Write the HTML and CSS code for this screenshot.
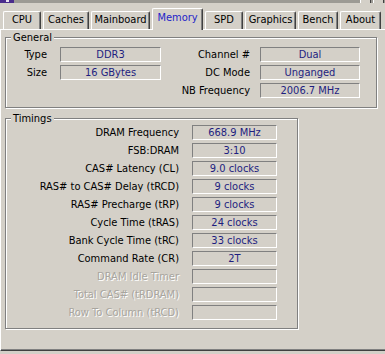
FILE: index.html
```html
<!DOCTYPE html>
<html>
<head>
<meta charset="utf-8">
<link rel="stylesheet" href="styles.css">
</head>
<body>
<div class="window">
  <div class="titlebar">
    <span class="appicon"><span class="appmark"></span></span>
    <span class="tbtns"><span class="tbtn"></span><span class="tbtn"></span></span>
  </div>
  <div class="tabs">
    <div class="tab t-cpu">CPU</div>
    <div class="tab t-caches">Caches</div>
    <div class="tab t-main">Mainboard</div>
    <div class="tab t-mem active">Memory</div>
    <div class="tab t-spd">SPD</div>
    <div class="tab t-gfx">Graphics</div>
    <div class="tab t-bench">Bench</div>
    <div class="tab t-about">About</div>
  </div>
  <div class="panel">
    <div class="group general">
      <div class="legend">General</div>
      <div class="gen-grid">
        <div class="lbl">Type</div>
        <div class="field">DDR3</div>
        <div class="lbl lbl2">Channel #</div>
        <div class="field">Dual</div>

        <div class="lbl">Size</div>
        <div class="field">16 GBytes</div>
        <div class="lbl lbl2">DC Mode</div>
        <div class="field">Unganged</div>

        <div class="lbl"></div>
        <div class="empty"></div>
        <div class="lbl lbl2">NB Frequency</div>
        <div class="field">2006.7 MHz</div>
      </div>
    </div>
    <div class="group timings">
      <div class="legend">Timings</div>
      <div class="tim-grid">
        <div class="lbl">DRAM Frequency</div><div class="field">668.9 MHz</div>
        <div class="lbl">FSB:DRAM</div><div class="field">3:10</div>
        <div class="lbl">CAS# Latency (CL)</div><div class="field">9.0 clocks</div>
        <div class="lbl">RAS# to CAS# Delay (tRCD)</div><div class="field">9 clocks</div>
        <div class="lbl">RAS# Precharge (tRP)</div><div class="field">9 clocks</div>
        <div class="lbl">Cycle Time (tRAS)</div><div class="field">24 clocks</div>
        <div class="lbl">Bank Cycle Time (tRC)</div><div class="field">33 clocks</div>
        <div class="lbl">Command Rate (CR)</div><div class="field">2T</div>
        <div class="lbl disabled">DRAM Idle Timer</div><div class="field"></div>
        <div class="lbl disabled">Total CAS# (tRDRAM)</div><div class="field"></div>
        <div class="lbl disabled">Row To Column (tRCD)</div><div class="field"></div>
      </div>
    </div>
  </div>
</div>
</body>
</html>
```

FILE: styles.css
```css
* { box-sizing: border-box; }
html, body {
  margin: 0;
  padding: 0;
  background: #d4d0c8;
  overflow: hidden;
}
body {
  width: 385px;
  height: 354px;
  font-family: "DejaVu Sans Condensed", "DejaVu Sans", sans-serif;
  font-size: 11px;
  color: #000;
}
.window {
  width: 385px;
  height: 354px;
  position: relative;
}
.titlebar {
  height: 3px;
  background: #9c9a94;
  display: flex;
  justify-content: space-between;
}
.appicon {
  width: 14px;
  height: 3px;
  background: #4a2c8c;
  display: flex;
  justify-content: center;
}
.appmark {
  width: 3px;
  height: 2px;
  background: #e8e0f0;
}
.tbtns {
  display: flex;
  gap: 2px;
  margin-right: 1px;
}
.tbtn {
  width: 11px;
  height: 3px;
  background: #d4d0c8;
  border-left: 1px solid #fff;
  border-right: 1px solid #404040;
}
.tabs {
  height: 26px;
  display: flex;
  align-items: flex-end;
  gap: 2px;
  padding-left: 3px;
  position: relative;
  z-index: 2;
}
.tab {
  height: 18px;
  border-top: 1px solid #fff;
  border-left: 1px solid #fff;
  border-right: 1px solid #404040;
  box-shadow: inset -1px 0 0 #808080;
  border-radius: 2px 2px 0 0;
  text-align: center;
  line-height: 16px;
  background: #d4d0c8;
}
.tab.active {
  height: 22px;
  margin-bottom: -1px;
  color: #2424c8;
  line-height: 18px;
}
.t-cpu { width: 38px; }
.t-caches { width: 46px; }
.t-main { width: 59px; }
.t-mem { width: 51px; }
.t-spd { width: 38px; }
.t-gfx { width: 51px; }
.t-bench { width: 40px; }
.t-about { width: 41px; }

.panel {
  width: 392px;
  height: 322px;
  border-top: 1px solid #fff;
  border-left: 1px solid #fff;
  border-bottom: 1px solid #404040;
  box-shadow: inset 0 -1px 0 #808080;
  padding: 7px 0 0 4px;
  position: relative;
  z-index: 1;
}
.group {
  position: relative;
  border: 1px solid #808080;
  box-shadow: inset 1px 1px 0 #fff, 1px 1px 0 #fff;
}
.legend {
  position: absolute;
  top: -7px;
  left: 5px;
  padding: 0 2px;
  background: #d4d0c8;
  line-height: 13px;
}
.general {
  width: 372px;
  height: 71px;
  padding: 9px 16px 0 0;
}
.timings {
  margin-top: 10px;
  width: 293px;
  height: 211px;
  padding: 6px 20px 0 0;
}
.gen-grid {
  display: grid;
  grid-template-columns: 54px 101px 1fr 100px;
  grid-auto-rows: 15px;
  row-gap: 3px;
}
.tim-grid {
  display: grid;
  grid-template-columns: 1fr 85px;
  grid-auto-rows: 15px;
  row-gap: 3px;
}
.lbl {
  text-align: right;
  line-height: 15px;
  white-space: nowrap;
  padding-right: 13px;
}
.gen-grid .lbl2 { padding-right: 10px; }
.lbl.disabled {
  color: #a8a59e;
  text-shadow: 1px 1px 0 #fff;
}
.field {
  height: 15px;
  border-top: 1px solid #808080;
  border-left: 1px solid #808080;
  border-bottom: 1px solid #fff;
  border-right: 1px solid #fff;
  text-align: center;
  line-height: 13px;
  color: #1e1e80;
  white-space: nowrap;
}
```
